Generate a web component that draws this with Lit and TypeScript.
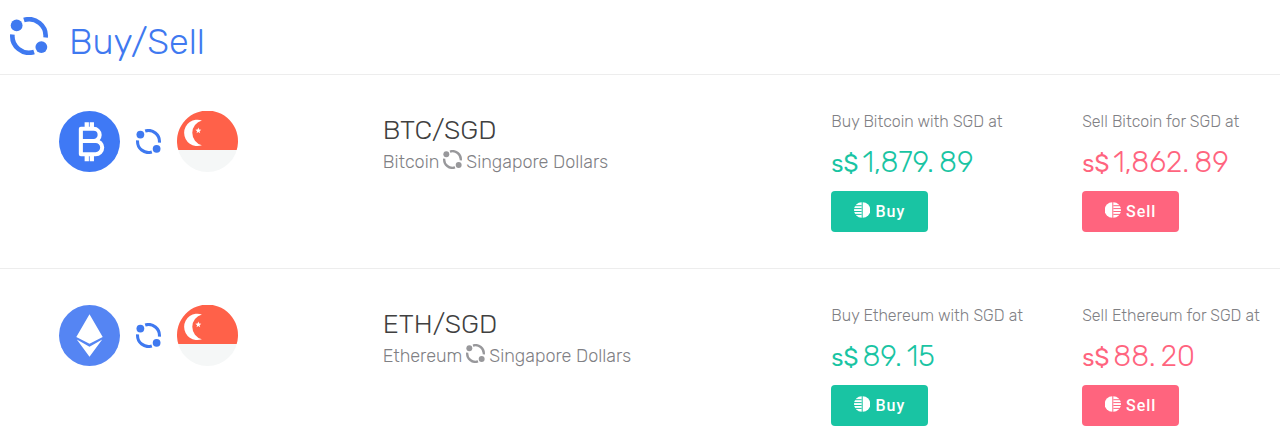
import { LitElement, html, css, svg } from "lit";
import { customElement, property } from "lit/decorators.js";

interface Market {
  code: string;
  name: string;
  buy: [string, string];
  sell: [string, string];
}

const markets: Market[] = [
  { code: "BTC", name: "Bitcoin", buy: ["1,879", "89"], sell: ["1,862", "89"] },
  { code: "ETH", name: "Ethereum", buy: ["89", "15"], sell: ["88", "20"] },
];

const swapIcon = html`<svg viewBox="0 0 36 36" aria-hidden="true">
  <g fill="none" stroke="currentColor" stroke-width="4.4">
    <path d="M13.2 2.900A15.800 15.800 0 0 1 33.700 19.500"></path>
    <path d="M2.300 16.500A15.800 15.800 0 0 0 22.800 33.100"></path>
  </g>
  <circle cx="6.3" cy="8" r="5.6" fill="currentColor"></circle>
  <circle cx="29.7" cy="28.500" r="5.6" fill="currentColor"></circle>
</svg>`;

const bitcoinCoin = html`<svg viewBox="0 0 60 60" aria-hidden="true">
  <circle cx="30" cy="30" r="30" fill="#3f79f5"></circle>
  <g fill="none" stroke="#fff" stroke-linejoin="round" stroke-linecap="round">
    <path stroke-width="4" d="M21.500 17.500H34a6 6 0 0 1 0 12H21.500M21.500 29.500H36a6.500 6.500 0 0 1 0 13H21.500V17.500"></path>
    <path stroke-width="4.200" stroke-linecap="butt" d="M27.300 11v5M32.300 11v5M27.300 44v5.500M32.300 44v5.500"></path>
  </g>
</svg>`;

const ethereumCoin = html`<svg viewBox="0 0 60 60" aria-hidden="true">
  <circle cx="30" cy="30" r="30" fill="#5585f3"></circle>
  <path fill="#fff" d="M30 9 43 31.500 30 38 17 31.500ZM17.500 34 30 41 42.500 34 30 51Z"></path>
</svg>`;

const singaporeFlag = html`<svg viewBox="0 0 60 60" aria-hidden="true">
  <circle cx="30" cy="30" r="30" fill="#f5f7f7"></circle>
  <path fill="#ff6149" d="M1.300 38.300A30 30 0 1 1 58.700 38.300Z"></path>
  <path fill="#fff" d="M24.500 9.300A13 13 0 1 0 24.500 33.700 12.600 12.600 0 0 1 24.500 9.300Z"></path>
  <path fill="#fff" d="m21 16.300.8 2 2.100.1-1.700 1.400.6 2.100-1.800-1.200-1.800 1.200.6-2.100-1.700-1.400 2.100-.1Z"></path>
</svg>`;

const halfSolid = svg`<path d="M8.700 0.300A7.500 7.500 0 0 1 8.700 15.700Z"></path>`;
const halfBars = svg`<path d="M7.700 .300A7.700 7.700 0 0 0 7.700 15.700Z"></path>`;
const halfLines = (color: string) =>
  svg`<path fill="none" stroke=${color} stroke-width="1" d="M0 3.700H7.700M0 6.600H7.700M0 9.500H7.700M0 12.400H7.700"></path>`;

@customElement("trade-quote")
class TradeQuote extends LitElement {
  @property() side: "buy" | "sell" = "buy";
  @property() asset = "";
  @property({ attribute: false }) price: [string, string] = ["", ""];

  static styles = css`
    :host { display: block; }
    .caption { margin: 0; font-weight: 300; font-size: 16px; line-height: 24px; color: #808084; white-space: nowrap; }
    .price { display: flex; align-items: baseline; margin: 8px 0 7px; font-weight: 300; font-size: 29px; line-height: 40px; white-space: nowrap; }
    .currency { font-size: 24px; margin-right: 4px; font-weight: 400; }
    .cents { margin-left: 5px; }
    .buy { color: #19c4a3; }
    .sell { color: #ff647e; }
    button { display: flex; align-items: center; justify-content: center; gap: 5px; width: 97px; height: 41px; padding: 0; border: 0; border-radius: 4px; font: 500 16px/20px Roboto, sans-serif; letter-spacing: 1px; color: #fff; cursor: pointer; }
    button svg { width: 16px; height: 16px; fill: currentColor; margin-bottom: 4px; }
    .fill-buy { background: #19c4a3; }
    .fill-sell { background: #ff647e; }
    .flip { transform: scaleX(-1); }
  `;

  render() {
    const buying = this.side === "buy";
    return html`
      <p class="caption">${buying ? "Buy" : "Sell"} ${this.asset} ${buying ? "with" : "for"} SGD at</p>
      <div class="price ${this.side}">
        <span class="currency">s$</span><span>${this.price[0]}.</span><span class="cents">${this.price[1]}</span>
      </div>
      <button type="button" class="fill-${this.side}">
        <svg class=${buying ? "" : "flip"} viewBox="0 0 16 16" aria-hidden="true">
          ${halfSolid}${halfBars}${halfLines(buying ? "#19c4a3" : "#ff647e")}
        </svg>
        ${buying ? "Buy" : "Sell"}
      </button>
    `;
  }
}

@customElement("app-root")
class AppRoot extends LitElement {
  static styles = css`
    :host { display: block; background: #fff; font-family: Rubik, Roboto, sans-serif; }
    svg { display: block; width: 100%; }
    header { display: flex; align-items: center; gap: 21px; height: 74px; padding: 0 10px; border-bottom: 1px solid #ededed; color: #3f79f0; }
    .logo { width: 38px; margin-bottom: 2px; }
    h1 { margin: 10px 0 0; font-weight: 300; font-size: 36px; line-height: 44px; }
    .market { display: grid; grid-template-columns: 324fr 449fr 251fr 198fr; padding: 35px 0 36px 59px; border-bottom: 1px solid #ededed; }
    .market:last-child { padding-bottom: 4px; border-bottom: 0; }
    .pair { display: flex; align-items: center; gap: 16px; height: 63px; color: #3f79f0; }
    .coin { width: 61px; }
    .swap { width: 25px; }
    h2 { margin: 2px 0 0; font-weight: 300; font-size: 27px; line-height: 36px; color: #404040; }
    .names { display: flex; align-items: center; gap: 4px; margin: 2px 0 0; font-weight: 300; font-size: 18px; line-height: 24px; color: #808084; }
    .small { width: 19px; margin-bottom: 5px; color: #98989b; }
  `;

  render() {
    return html`
      <header><span class="logo">${swapIcon}</span><h1>Buy/Sell</h1></header>
      <main>
        ${markets.map(
          (m) => html`<section class="market">
            <div class="pair">
              <span class="coin">${m.code === "BTC" ? bitcoinCoin : ethereumCoin}</span>
              <span class="swap">${swapIcon}</span>
              <span class="coin">${singaporeFlag}</span>
            </div>
            <div>
              <h2>${m.code}/SGD</h2>
              <p class="names"><span>${m.name}</span><span class="small">${swapIcon}</span><span>Singapore Dollars</span></p>
            </div>
            <trade-quote side="buy" .asset=${m.name} .price=${m.buy}></trade-quote>
            <trade-quote side="sell" .asset=${m.name} .price=${m.sell}></trade-quote>
          </section>`
        )}
      </main>
    `;
  }
}
